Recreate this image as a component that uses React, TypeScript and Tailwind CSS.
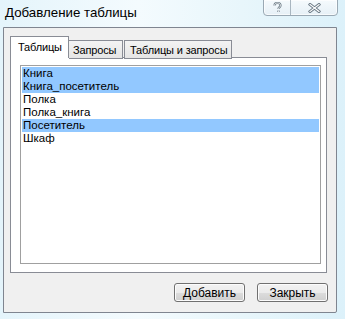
import React from "react";

const items = [
  { name: "Книга", sel: true },
  { name: "Книга_посетитель", sel: true },
  { name: "Полка", sel: false },
  { name: "Полка_книга", sel: false },
  { name: "Посетитель", sel: true },
  { name: "Шкаф", sel: false },
];

function Btn({ label }: { label: string }) {
  return (
    <div className="w-[71px] h-[19px] rounded-[3px] border border-[#707070] bg-[linear-gradient(#f2f2f2_0%,#ebebeb_50%,#dddddd_50%,#cfcfcf_100%)] shadow-[inset_0_0_0_1px_#fcfcfc] flex items-center justify-center text-[12px] text-black leading-none">
      {label}
    </div>
  );
}

export default function App() {
  return (
    <div
      className="w-[345px] h-[319px] flex flex-col bg-[linear-gradient(90deg,#e4f4fb,#f4fbfe_40%,#e8f6fb_70%,#dcf1fa)] overflow-hidden"
      style={{ fontFamily: '"Liberation Sans", Arial, sans-serif' }}
    >
      <div className="h-[27px] flex items-start justify-between shrink-0">
        <div className="pl-[5px] pt-[5px] text-[13.3px] text-black leading-[16px] whitespace-nowrap">Добавление таблицы</div>
        <div className="mr-[7px] mt-[-1px] h-[17px] w-[75px] flex rounded-b-[4px] border border-[#9aa9b4] bg-[linear-gradient(#f5fafd,#e6f0f6)] shadow-[inset_0_0_0_1px_#ffffffaa]">
          <div className="w-[27px] border-r border-[#a9b6c0] flex items-center justify-center">
            <svg width="9" height="11" viewBox="0 0 9 11">
              <path d="M1.5 3.5 C1.5 1.5 3 1 4.5 1 C6.5 1 7.5 2 7.5 3.5 C7.5 5 5.5 5.3 5.5 7 M5.5 8.5 V10" fill="none" stroke="#6b7a85" strokeWidth="2.2" />
              <path d="M1.5 3.5 C1.5 1.5 3 1 4.5 1 C6.5 1 7.5 2 7.5 3.5 C7.5 5 5.5 5.3 5.5 7 M5.5 8.5 V10" fill="none" stroke="#ffffff" strokeWidth="0.8" />
            </svg>
          </div>
          <div className="flex-1 flex items-center justify-center">
            <svg width="13" height="10" viewBox="0 0 13 10">
              <path d="M2 1.5 L11 8.5 M11 1.5 L2 8.5" fill="none" stroke="#6b7a85" strokeWidth="3" strokeLinecap="square" />
              <path d="M2 1.5 L11 8.5 M11 1.5 L2 8.5" fill="none" stroke="#ffffff" strokeWidth="1.2" strokeLinecap="square" />
            </svg>
          </div>
        </div>
      </div>
      <div className="ml-[3px] mr-[8px] h-[286px] shrink-0 border border-[#7f8590] rounded-br-[2px] bg-[#f0f0f0] flex flex-col pl-[6px] pr-[9px] pt-[8px]">
        <div className="flex items-end h-[22px] text-[11px] tracking-[-0.15px] text-black relative z-10 whitespace-nowrap">
          <div className="w-[59px] h-[22px] bg-white border border-b-0 border-[#898c95] pl-[7px] pt-[3px] leading-[14px]">Таблицы</div>
          <div className="w-[54px] h-[19px] bg-[linear-gradient(#f3f3f3,#e5e5e5)] border border-l-0 border-[#898c95] pl-[4px] pt-[2px] leading-[14px] mb-[-1px]">Запросы</div>
          <div className="ml-[1px] w-[108px] h-[19px] bg-[linear-gradient(#f3f3f3,#e5e5e5)] border border-[#898c95] pl-[5px] pt-[2px] leading-[14px] mb-[-1px]">Таблицы и запросы</div>
        </div>
        <div className="h-[216px] mt-[-1px] border border-[#898c95] bg-white pl-[9px] pr-[5px] pt-[7px] pb-[8px]">
          <div className="h-full border border-[#a0a0a0] pt-[1px] px-[1px] text-[11.5px] text-black">
            {items.map((it) => (
              <div
                key={it.name}
                className={`h-[13px] leading-[13px] pl-[1px] whitespace-nowrap ${it.sel ? "bg-[#92c8ff]" : ""}`}
              >
                {it.name}
              </div>
            ))}
          </div>
        </div>
        <div className="flex justify-end gap-[12px] mt-[10px] mr-[-1px]">
          <Btn label="Добавить" />
          <Btn label="Закрыть" />
        </div>
      </div>
    </div>
  );
}
